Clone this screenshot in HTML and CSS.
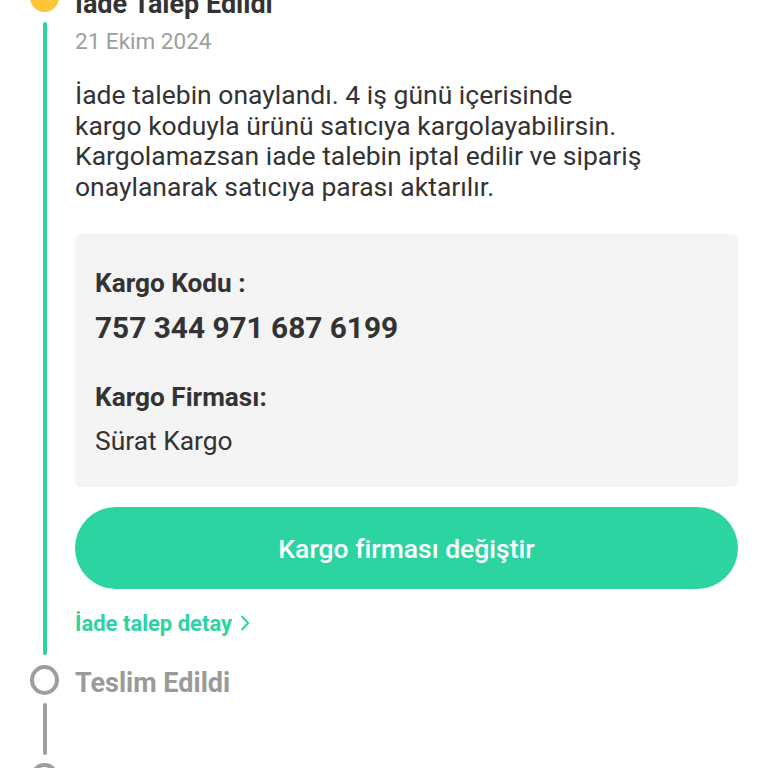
FILE: index.html
```html
<!DOCTYPE html>
<html lang="tr">
<head>
<meta charset="utf-8">
<title>İade Talep</title>
<link rel="stylesheet" href="styles.css">
</head>
<body>
<div class="timeline">
  <div class="step step-active">
    <div class="rail">
      <span class="dot dot-yellow"></span>
      <span class="bar bar-green"></span>
    </div>
    <div class="body">
      <h2 class="step-title title-first">İade Talep Edildi</h2>
      <div class="step-date">21 Ekim 2024</div>
      <p class="step-text">İade talebin onaylandı. 4 iş günü içerisinde<br>kargo koduyla ürünü satıcıya kargolayabilirsin.<br>Kargolamazsan iade talebin iptal edilir ve sipariş<br>onaylanarak satıcıya parası aktarılır.</p>
      <div class="info-box">
        <div class="info-label">Kargo Kodu :</div>
        <div class="info-code">757 344 971 687 6199</div>
        <div class="info-label info-label-2">Kargo Firması:</div>
        <div class="info-value">Sürat Kargo</div>
      </div>
      <button class="primary-btn">Kargo firması değiştir</button>
      <a class="detail-link" href="#">İade talep detay
        <svg class="chev" width="10" height="18" viewBox="0 0 10 18"><path d="M2 2.5l6.2 6.5-6.2 6.5" fill="none" stroke="currentColor" stroke-width="1.9" stroke-linecap="round" stroke-linejoin="round"/></svg>
      </a>
    </div>
  </div>
  <div class="step step-pending">
    <div class="rail">
      <span class="dot dot-ring"></span>
      <span class="bar bar-gray"></span>
    </div>
    <div class="body">
      <h2 class="step-title title-gray">Teslim Edildi</h2>
    </div>
  </div>
  <div class="step step-pending">
    <div class="rail">
      <span class="dot dot-ring"></span>
    </div>
    <div class="body"></div>
  </div>
</div>
</body>
</html>
```
FILE: styles.css
```css
html, body {
  margin: 0;
  padding: 0;
  background: #ffffff;
  overflow: hidden;
}
body {
  font-family: Roboto, "Noto Sans", sans-serif;
  color: #333333;
  height: 768px;
}
.timeline {
  margin-top: -17px;
  display: flex;
  flex-direction: column;
}
.step {
  display: flex;
}
.rail {
  width: 29px;
  margin-left: 30px;
  margin-right: 16px;
  display: flex;
  flex-direction: column;
  align-items: center;
  flex-shrink: 0;
}
.dot {
  width: 29px;
  height: 29px;
  border-radius: 50%;
  box-sizing: border-box;
  flex-shrink: 0;
}
.dot-yellow {
  background: #fcc53a;
}
.dot-ring {
  border: 4px solid #9e9e9e;
  background: #ffffff;
  width: 29px;
  height: 30px;
}
.bar {
  width: 4px;
  flex: 1;
  border-radius: 2px;
}
.bar-green {
  background: #2bd4a1;
  margin: 10px 0 10px;
}
.bar-gray {
  background: #9e9e9e;
  margin: 8px 0 8px;
  min-height: 52px;
}
.body {
  flex: 1;
  padding-right: 30px;
}
.step-active .body {
  padding-bottom: 27px;
}
.step-title {
  margin: 0;
  font-size: 27px;
  line-height: 29px;
  font-weight: 700;
  color: #333333;
}
.title-first {
  margin-top: 7px;
}
.title-gray {
  color: #9a9a9a;
  margin-top: 4px;
}
.step-date {
  margin-top: 8px;
  font-size: 22.5px;
  line-height: 28px;
  color: #9e9e9e;
}
.step-text {
  margin: 25px 0 0;
  font-size: 26.5px;
  line-height: 30.5px;
  color: #333333;
}
.info-box {
  margin-top: 32px;
  background: #f4f4f4;
  border-radius: 6px;
  padding: 34px 20px 31px;
}
.info-label {
  font-size: 26.2px;
  line-height: 30px;
  font-weight: 700;
  color: #333333;
}
.info-label-2 {
  margin-top: 37px;
}
.info-code {
  margin-top: 13px;
  font-size: 29.8px;
  line-height: 34px;
  font-weight: 700;
  color: #333333;
}
.info-value {
  margin-top: 14px;
  font-size: 26.4px;
  line-height: 30px;
  color: #333333;
}
.primary-btn {
  display: block;
  width: 100%;
  margin-top: 20px;
  height: 82px;
  border: 0;
  border-radius: 41px;
  background: #2bd4a1;
  color: #ffffff;
  font-family: Roboto, "Noto Sans", sans-serif;
  font-size: 26.5px;
  font-weight: 500;
  padding: 0;
}
.detail-link {
  display: inline-flex;
  align-items: center;
  gap: 8px;
  margin-top: 21px;
  font-size: 22px;
  line-height: 28px;
  font-weight: 700;
  color: #2bd4a1;
  text-decoration: none;
}
.chev {
  margin-top: -2px;
}
```
